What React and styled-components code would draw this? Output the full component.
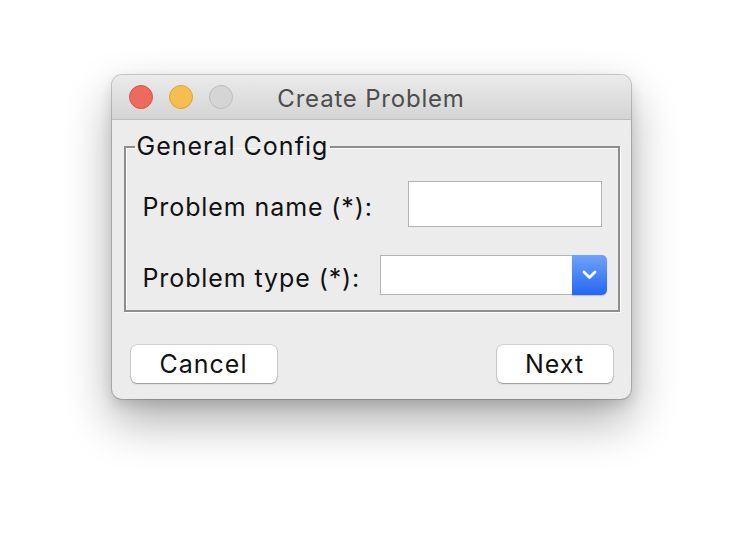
import styled, { createGlobalStyle } from "styled-components";

const GlobalStyle = createGlobalStyle`
	body {
		margin: 0;
		background: #ffffff;
		font-family: Inter, "Liberation Sans", Arial, sans-serif;
	}
`;

const Page = styled.div`
	width: 742px;
	height: 546px;
	padding-top: 75px;
	box-sizing: border-box;
`;

const Window = styled.div`
	width: 519px;
	margin: 0 auto;
	background: #ececec;
	border-radius: 10px;
	overflow: hidden;
	box-shadow: 0 0 0 1px rgba(0, 0, 0, 0.18), 0 22px 48px rgba(0, 0, 0, 0.32),
		0 6px 14px rgba(0, 0, 0, 0.12);
`;

const TitleBar = styled.div`
	height: 44px;
	display: grid;
	grid-template-columns: 1fr auto 1fr;
	align-items: center;
	padding: 0 17px;
	background: linear-gradient(#ebebeb, #d4d4d4);
	border-bottom: 1px solid #bdbdbd;
`;

const Lights = styled.div`
	display: flex;
	gap: 16px;
`;

const Light = styled.span`
	width: 24px;
	height: 24px;
	border-radius: 50%;
	box-sizing: border-box;
	background: ${(p) => p.$fill};
	border: 1px solid ${(p) => p.$edge};
`;

const Title = styled.div`
	font-size: 24px;
	color: #4d4d4d;
	letter-spacing: 0.8px;
	padding-top: 2px;
`;

const Body = styled.div`
	padding: 12px 11px 16px 12px;
`;

const Group = styled.fieldset`
	margin: 0;
	padding: 0 0 15px 9px;
	border: 2px solid #8e8e8e;
	box-shadow: inset 1px 1px 0 #fff, 1px 1px 0 #fff;
`;

const Legend = styled.legend`
	padding: 0 2px;
	font-size: 25px;
	letter-spacing: 1px;
	color: #111;
	line-height: 29px;
`;

const Row = styled.div`
	display: flex;
	align-items: center;
	margin-top: ${(p) => p.$top}px;
	padding-left: 8px;
`;

const Label = styled.span`
	font-size: 25px;
	letter-spacing: 0.9px;
	color: #111;
	margin-right: auto;
	padding-top: 5px;
`;

const TextField = styled.div`
	width: 194px;
	height: 46px;
	box-sizing: border-box;
	background: #fff;
	border: 1px solid #b3b3b3;
	margin-right: 16px;
`;

const Combo = styled.div`
	width: 227px;
	height: 40px;
	display: flex;
	margin-right: 11px;
`;

const ComboField = styled.div`
	flex: 1;
	background: #fff;
	border: 1px solid #b3b3b3;
	border-right: none;
`;

const ComboButton = styled.div`
	width: 35px;
	display: flex;
	align-items: center;
	justify-content: center;
	border-radius: 0 5px 5px 0;
	background: linear-gradient(#6fa2f8, #2467f5);
	box-shadow: 0 1px 1px rgba(0, 0, 0, 0.2);
`;

const Buttons = styled.div`
	display: flex;
	justify-content: space-between;
	padding: 33px 7px 0 7px;
`;

const Button = styled.button`
	width: ${(p) => p.$width}px;
	height: 38px;
	background: #fff;
	border: none;
	border-radius: 6px;
	font-family: inherit;
	font-size: 25px;
	letter-spacing: 1px;
	color: #111;
	box-shadow: 0 0 0 0.5px rgba(0, 0, 0, 0.22), 0 1px 1.5px rgba(0, 0, 0, 0.28);
	padding: 0;
`;

export default function App() {
	return (
		<>
			<GlobalStyle />
			<Page>
				<Window>
					<TitleBar>
						<Lights>
							<Light $fill="#ee6a5e" $edge="#d5544a" />
							<Light $fill="#f6be4f" $edge="#dba23b" />
							<Light $fill="#d5d5d5" $edge="#bcbcbc" />
						</Lights>
						<Title>Create Problem</Title>
						<span />
					</TitleBar>
					<Body>
						<Group>
							<Legend>General Config</Legend>
							<Row $top={20}>
								<Label>Problem name (*):</Label>
								<TextField />
							</Row>
							<Row $top={28}>
								<Label>Problem type (*):</Label>
								<Combo>
									<ComboField />
									<ComboButton>
										<svg width="15" height="10" viewBox="0 0 15 10">
											<path
												d="M2 2 L7.5 7.5 L13 2"
												fill="none"
												stroke="#fff"
												strokeWidth="2.8"
												strokeLinecap="round"
												strokeLinejoin="round"
											/>
										</svg>
									</ComboButton>
								</Combo>
							</Row>
						</Group>
						<Buttons>
							<Button $width={146}>Cancel</Button>
							<Button $width={116}>Next</Button>
						</Buttons>
					</Body>
				</Window>
			</Page>
		</>
	);
}
